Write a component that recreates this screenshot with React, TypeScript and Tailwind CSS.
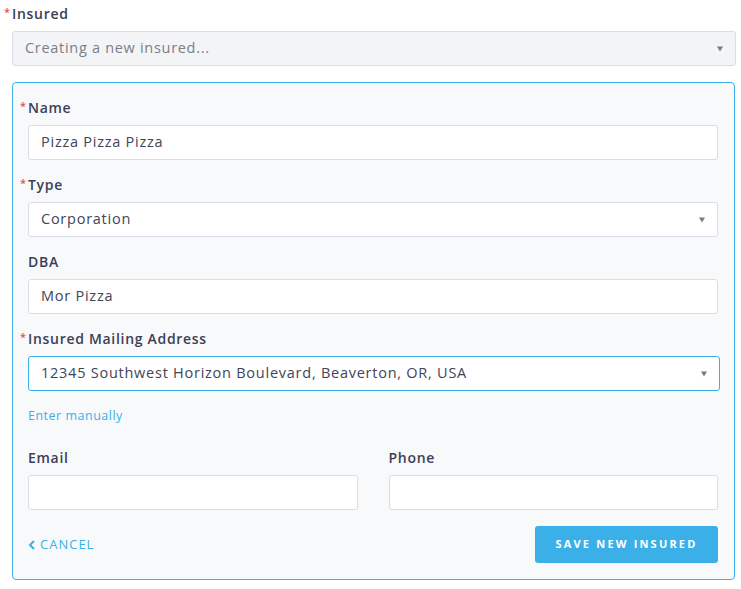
const font = { fontFamily: '"Open Sans", "Liberation Sans", sans-serif' };

function Label({ text, required }: { text: string; required?: boolean }) {
  return (
    <div className="relative mb-2 h-[17px] text-[14px] leading-[16px] font-semibold tracking-[0.7px] text-[#3b4055]">
      {required && <span className="absolute -left-[8px] top-[-2px] text-[11px] text-[#e0524f]">*</span>}
      {text}
    </div>
  );
}

function Caret() {
  return <span className="absolute right-[12px] top-1/2 -translate-y-1/2 border-x-[3.5px] border-t-[5px] border-x-transparent border-t-[#7b7b7b]" />;
}

function Input({ value, select, focused }: { value?: string; select?: boolean; focused?: boolean }) {
  return (
    <div
      className={`relative flex h-[35px] items-center rounded-[3px] border bg-white px-[12px] pb-[1px] text-[14.5px] tracking-[0.75px] text-[#3f4459] ${
        focused ? 'border-[#3bb0e8]' : 'border-[#d8dde6]'
      }`}
    >
      {value}
      {select && <Caret />}
    </div>
  );
}

export default function App() {
  return (
    <div className="min-h-[589px] bg-white pl-[12px] pr-[5px] pt-[6px]" style={font}>
      <Label text="Insured" required />
      <div className="relative flex h-[35px] items-center rounded-[3px] border border-[#d8dde6] bg-[#f3f4f6] px-[12px] pb-[1px] text-[14.5px] tracking-[0.7px] text-[#7b7e86]">
        Creating a new insured...
        <Caret />
      </div>

      <div className="mt-[16px] mr-[1px] rounded-[4px] border border-[#3bb0e8] bg-[#f8f9fb] pl-[15px] pr-[16px] pt-[17px] pb-[16px]">
        <Label text="Name" required />
        <Input value="Pizza Pizza Pizza" />

        <div className="mt-[17px]">
          <Label text="Type" required />
          <Input value="Corporation" select />
        </div>

        <div className="mt-[17px]">
          <Label text="DBA" />
          <Input value="Mor Pizza" />
        </div>

        <div className="mt-[17px]">
          <Label text="Insured Mailing Address" required />
          <div className="mr-[-2px]">
            <Input value="12345 Southwest Horizon Boulevard, Beaverton, OR, USA" select focused />
          </div>
        </div>

        <div className="mt-[17px] text-[12.5px] leading-[15px] tracking-[0.5px] text-[#3bb0e8]">Enter manually</div>

        <div className="mt-[27px] grid grid-cols-2 gap-[31px]">
          <div>
            <Label text="Email" />
            <Input />
          </div>
          <div>
            <Label text="Phone" />
            <Input />
          </div>
        </div>

        <div className="mt-[16px] flex items-center justify-between">
          <div className="flex items-center gap-[4px] text-[13px] tracking-[1px] text-[#3bb0e8]">
            <svg width="8" height="10" viewBox="0 0 8 10" fill="none">
              <path d="M6 1L2 5l4 4" stroke="#3bb0e8" strokeWidth="2" />
            </svg>
            CANCEL
          </div>
          <button className="h-[37px] w-[183px] rounded-[3px] bg-[#3bb0e8] text-[11px] font-bold tracking-[2.2px] text-white">
            SAVE NEW INSURED
          </button>
        </div>
      </div>
    </div>
  );
}
